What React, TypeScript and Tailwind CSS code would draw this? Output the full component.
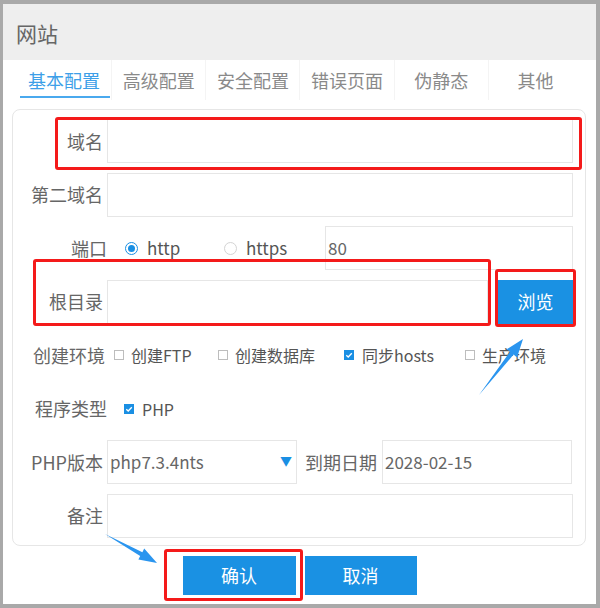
import React from 'react'

const TABS = ['基本配置', '高级配置', '安全配置', '错误页面', '伪静态', '其他']

function Radio({ checked }: { checked?: boolean }) {
  return (
    <span
      className={
        'flex h-[13px] w-[13px] shrink-0 items-center justify-center rounded-full border ' +
        (checked ? 'border-[#1a8fe3]' : 'border-[#d4d4d4]')
      }
    >
      {checked && <span className="h-[7px] w-[7px] rounded-full bg-[#1a8fe3]" />}
    </span>
  )
}

function Check({ checked }: { checked?: boolean }) {
  if (checked) {
    return (
      <span className="flex h-[10px] w-[10px] shrink-0 items-center justify-center bg-[#1a8fe3]">
        <svg width="8" height="8" viewBox="0 0 8 8">
          <path d="M1.3 4.2 L3.2 6 L6.8 2.2" fill="none" stroke="#fff" strokeWidth="1.3" />
        </svg>
      </span>
    )
  }
  return <span className="h-[10px] w-[10px] shrink-0 border border-[#bdbdbd] bg-white" />
}

function Label({ text, w = 'w-[90px]' }: { text: string; w?: string }) {
  return <div className={w + ' shrink-0 text-right text-[18px] text-[#666]'}>{text}</div>
}

function Box({ w, value, children }: { w: string; value?: string; children?: React.ReactNode }) {
  return (
    <div className={w + ' relative flex h-[44px] shrink-0 items-center border border-[#e6e6e6] bg-white pl-[2px] text-[17px] text-[#666]'}>
      {value}
      {children}
    </div>
  )
}

export default function App() {
  return (
    <div
      className="relative h-[608px] w-[600px] bg-[#a9a9a9] pb-[4px] pl-[3px] pr-[4px] pt-[4px]"
      style={{ fontFamily: '"Noto Sans CJK SC", "Noto Sans", sans-serif' }}
    >
      <div className="flex h-full flex-col bg-white">
        <div className="flex h-[56px] items-center bg-[#eeeeee] pl-[13px] pt-[3px] text-[21px] text-[#666]">网站</div>

        <div className="ml-[14px] grid h-[40px] w-[565px] grid-cols-6">
          {TABS.map((t, i) => (
            <div
              key={t}
              className={
                'relative flex items-center justify-center text-[18px] ' +
                (i > 0 ? 'border-l border-[#f4f4f4] ' : '') +
                (i === 0 ? 'text-[#3d9fe8]' : 'text-[#8a8a8a]')
              }
            >
              {t}
              {i === 0 && <span className="absolute bottom-[2px] left-[3px] right-[1px] h-[2px] bg-[#4aa9ee]" />}
            </div>
          ))}
        </div>

        <div className="ml-[9px] mr-[10px] mt-[9px] flex h-[437px] flex-col gap-[9.5px] rounded-[8px] border border-[#e6e6e6] pt-[9px]">
          <div className="flex h-[44px] items-center gap-[4px]">
            <Label text="域名" />
            <Box w="w-[466px]" />
          </div>
          <div className="flex h-[44px] items-center gap-[4px]">
            <Label text="第二域名" />
            <Box w="w-[466px]" />
          </div>
          <div className="flex h-[44px] items-center">
            <Label text="端口" w="w-[94px]" />
            <div className="ml-[18px] flex w-[99px] items-center gap-[9px] text-[17px] text-[#555]">
              <Radio checked />
              <span>http</span>
            </div>
            <div className="flex items-center gap-[9px] text-[17px] text-[#555]">
              <Radio />
              <span>https</span>
            </div>
            <div className="ml-auto mr-[12px]">
              <Box w="w-[248px]" value="80" />
            </div>
          </div>
          <div className="flex h-[44px] items-center">
            <Label text="根目录" />
            <div className="ml-[4px]">
              <Box w="w-[381px]" />
            </div>
            <button className="ml-[10px] h-[44px] w-[75px] bg-[#1a91e3] text-[18px] text-white">浏览</button>
          </div>
          <div className="flex h-[44px] items-center text-[16px] text-[#555]">
            <Label text="创建环境" w="w-[92px]" />
            <div className="ml-[9px] flex w-[104px] items-center gap-[7px]">
              <Check />
              <span>创建FTP</span>
            </div>
            <div className="flex w-[126px] items-center gap-[7px]">
              <Check />
              <span>创建数据库</span>
            </div>
            <div className="flex w-[121px] items-center gap-[8px]">
              <Check checked />
              <span>同步hosts</span>
            </div>
            <div className="flex items-center gap-[7px]">
              <Check />
              <span>生产环境</span>
            </div>
          </div>
          <div className="flex h-[44px] items-center text-[16px] text-[#555]">
            <Label text="程序类型" w="w-[94px]" />
            <div className="ml-[17px] flex items-center gap-[8px]">
              <Check checked />
              <span>PHP</span>
            </div>
          </div>
          <div className="flex h-[44px] items-center">
            <Label text="PHP版本" />
            <div className="ml-[4px]">
              <Box w="w-[190px]" value="php7.3.4nts">
                <span className="absolute right-[4px] top-[12px] text-[12px] leading-[16px] text-[#1a8fe3]">▼</span>
              </Box>
            </div>
            <div className="ml-[8px] text-[18px] text-[#666]">到期日期</div>
            <div className="ml-[5px]">
              <Box w="w-[190px]" value="2028-02-15" />
            </div>
          </div>
          <div className="flex h-[44px] items-center gap-[4px]">
            <Label text="备注" />
            <Box w="w-[466px]" />
          </div>
        </div>

        <div className="mt-[10px] flex justify-center gap-[9px]">
          <button className="h-[39px] w-[113px] bg-[#1a91e3] text-[18px] text-white">确认</button>
          <button className="h-[39px] w-[112px] bg-[#1a91e3] text-[18px] text-white">取消</button>
        </div>
      </div>

      {/* annotations */}
      <div className="pointer-events-none absolute left-[55px] top-[117px] h-[53px] w-[527px] rounded-[3px] border-[3px] border-[#f41a1a]" />
      <div className="pointer-events-none absolute left-[33px] top-[259px] h-[67px] w-[458px] rounded-[3px] border-[3px] border-[#f41a1a]" />
      <div className="pointer-events-none absolute left-[495px] top-[269px] h-[58px] w-[81px] rounded-[3px] border-[3px] border-[#f41a1a]" />
      <div className="pointer-events-none absolute left-[164px] top-[549px] h-[52px] w-[139px] rounded-[3px] border-[3px] border-[#f41a1a]" />

      <svg className="pointer-events-none absolute left-0 top-0" width="600" height="608">
        <polygon
          points="479,395 513.6,354.6 517,357.4 523,339 506.7,349.2 510,351.8"
          fill="#2a95ef"
        />
        <polygon
          points="105,534 140.2,556 138.4,559.6 157,563 144.2,548.6 142.4,552.2"
          fill="#2a95ef"
        />
      </svg>
    </div>
  )
}
